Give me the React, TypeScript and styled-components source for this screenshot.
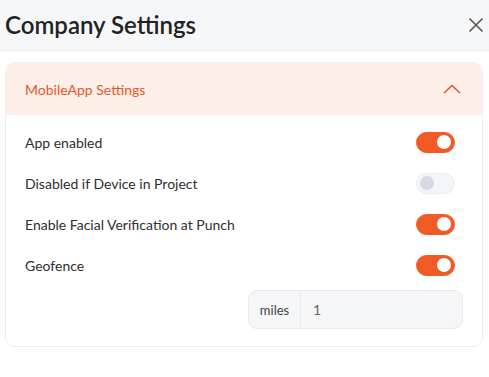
import { useState } from "react";
import styled, { createGlobalStyle } from "styled-components";

const GlobalStyle = createGlobalStyle`
  body {
    margin: 0;
    background: #ffffff;
    font-family: Lato, "Open Sans", sans-serif;
    color: #2b2b2b;
  }
`;

const Header = styled.div`
  height: 50px;
  display: flex;
  align-items: center;
  justify-content: space-between;
  padding: 0 5px 0 5px;
  background: #f5f6f8;
  border-bottom: 1px solid #e8eaed;
`;

const Title = styled.h1`
  margin: 0 0 1px;
  font-size: 24px;
  font-weight: 600;
  color: #222;
`;

const CloseButton = styled.button`
  border: none;
  background: none;
  padding: 0;
  width: 16px;
  height: 16px;
  display: flex;
  cursor: pointer;
`;

const Card = styled.div`
  margin: 11px 6px 0 5px;
  border: 1px solid #eceef0;
  border-radius: 10px;
  overflow: hidden;
`;

const CardHeader = styled.div`
  height: 52px;
  display: flex;
  align-items: center;
  justify-content: space-between;
  padding: 0 21px 0 19px;
  background: #fdeee8;
  color: #e3582b;
  font-size: 14px;
`;

const CardBody = styled.div`
  padding: 17px 19px 17px 19px;
`;

const Row = styled.div`
  height: 20px;
  display: flex;
  align-items: center;
  justify-content: space-between;
  padding-right: 8px;
  font-size: 14px;
  color: #2e2e2e;
  & + & {
    margin-top: 21px;
  }
`;

const Track = styled.button<{ $on: boolean }>`
  width: 39px;
  height: 21px;
  border-radius: 11px;
  padding: 0 3px;
  display: flex;
  align-items: center;
  justify-content: ${(p) => (p.$on ? "flex-end" : "flex-start")};
  border: 1px solid ${(p) => (p.$on ? "#f15a24" : "#e9ebee")};
  background: ${(p) => (p.$on ? "#f15a24" : "#f4f5f7")};
  cursor: pointer;
`;

const Knob = styled.span<{ $on: boolean }>`
  width: 14px;
  height: 14px;
  border-radius: 50%;
  background: ${(p) => (p.$on ? "#ffffff" : "#d5d9e1")};
`;

const InputRow = styled.div`
  display: flex;
  justify-content: flex-end;
  margin-top: 15px;
`;

const InputGroup = styled.div`
  width: 215px;
  height: 39px;
  display: flex;
  box-sizing: border-box;
  border: 1px solid #e8eaed;
  border-radius: 9px;
  background: #f5f6f8;
  overflow: hidden;
`;

const Addon = styled.span`
  width: 51px;
  display: flex;
  align-items: center;
  justify-content: center;
  border-right: 1px solid #e8eaed;
  font-size: 13px;
  color: #444;
`;

const Field = styled.input`
  flex: 1;
  min-width: 0;
  border: none;
  background: transparent;
  padding: 0 12px;
  font-family: Lato, sans-serif;
  font-size: 14px;
  color: #666;
  outline: none;
`;

type Setting = { label: string; on: boolean };

const initial: Setting[] = [
  { label: "App enabled", on: true },
  { label: "Disabled if Device in Project", on: false },
  { label: "Enable Facial Verification at Punch", on: true },
  { label: "Geofence", on: true },
];

function Toggle({ on, onClick }: { on: boolean; onClick: () => void }) {
  return (
    <Track $on={on} onClick={onClick}>
      <Knob $on={on} />
    </Track>
  );
}

function App() {
  const [settings, setSettings] = useState(initial);
  const [miles, setMiles] = useState("1");

  const flip = (i: number) => {
    setSettings((s) => s.map((x, j) => (j === i ? { ...x, on: !x.on } : x)));
  };

  return (
    <>
      <GlobalStyle />
      <Header>
        <Title>Company Settings</Title>
        <CloseButton>
          <svg width="16" height="16" viewBox="0 0 16 16">
            <path d="M1.5 1.5 L14.5 14.5 M14.5 1.5 L1.5 14.5" stroke="#555" strokeWidth="1.6" fill="none" />
          </svg>
        </CloseButton>
      </Header>
      <Card>
        <CardHeader>
          <span>MobileApp Settings</span>
          <svg width="18" height="10" viewBox="0 0 18 10">
            <path d="M1 9 L9 1.5 L17 9" stroke="#e3582b" strokeWidth="1.6" fill="none" />
          </svg>
        </CardHeader>
        <CardBody>
          {settings.map((s, i) => (
            <Row key={s.label}>
              <span>{s.label}</span>
              <Toggle on={s.on} onClick={() => flip(i)} />
            </Row>
          ))}
          <InputRow>
            <InputGroup>
              <Addon>miles</Addon>
              <Field value={miles} onChange={(e) => setMiles(e.target.value)} />
            </InputGroup>
          </InputRow>
        </CardBody>
      </Card>
    </>
  );
}

export default App;
